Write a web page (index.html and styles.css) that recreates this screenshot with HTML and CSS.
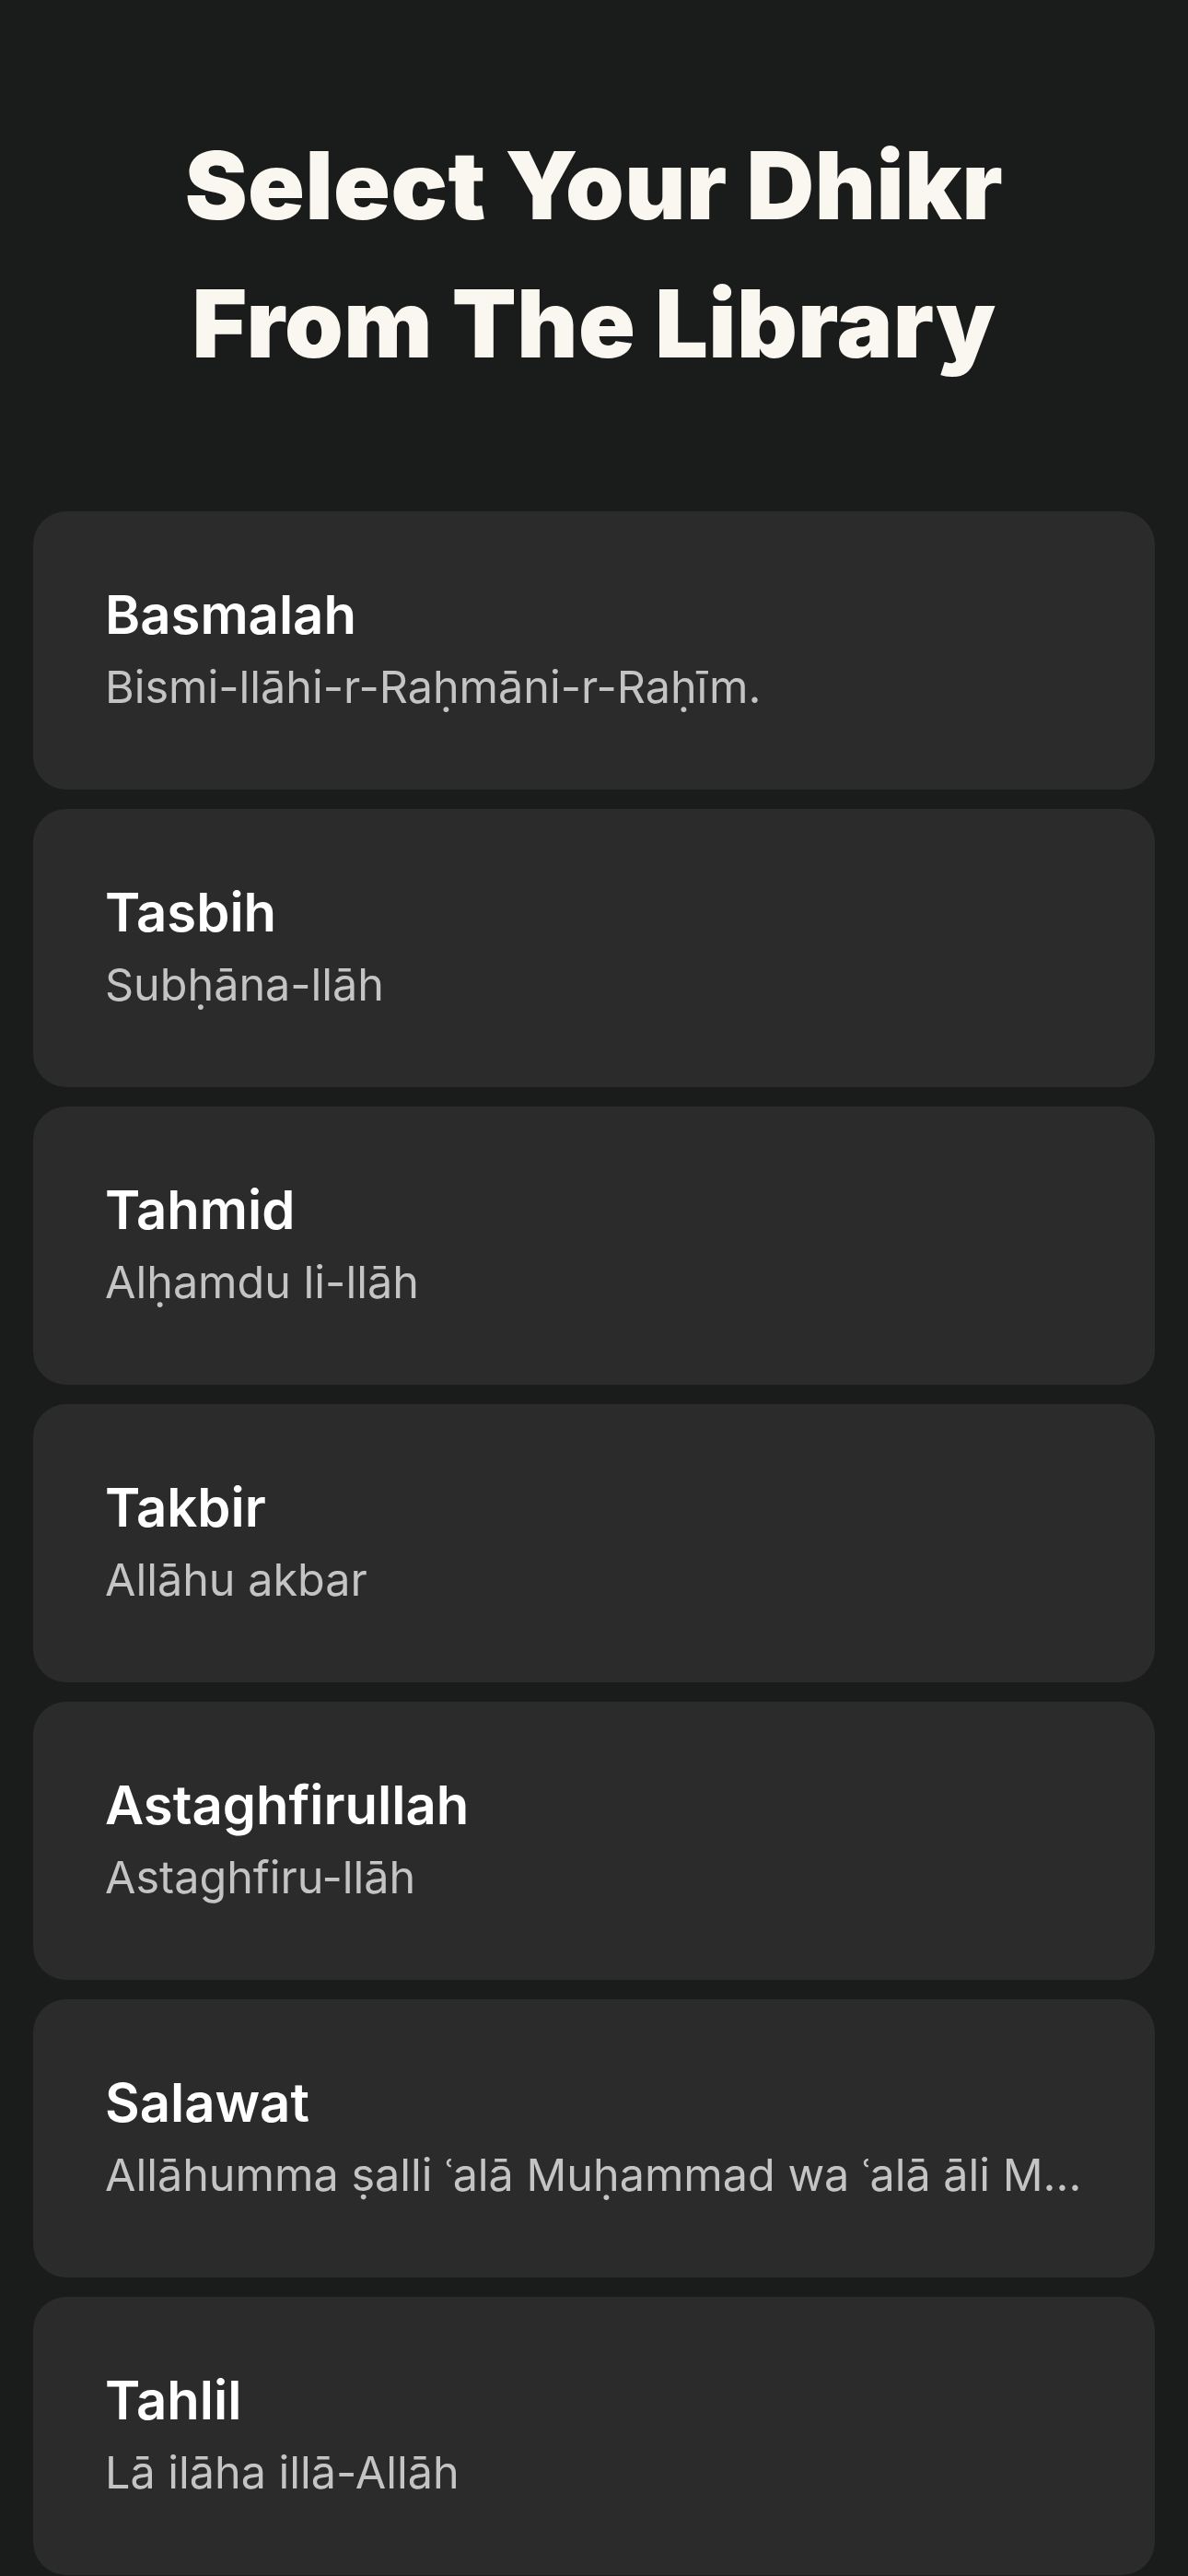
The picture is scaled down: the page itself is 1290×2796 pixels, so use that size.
FILE: index.html
```
<!DOCTYPE html>
<html lang="en">
<head>
	<meta charset="UTF-8">
	<title>Select Your Dhikr</title>
	<link rel="stylesheet" href="styles.css">
</head>
<body>

<h1 class="heading">Select Your Dhikr<br>From The Library</h1>

<div class="library">
	<div class="card">
		<div class="card-title">Basmalah</div>
		<div class="card-text">Bismi-llāhi-r-Raḥmāni-r-Raḥīm.</div>
	</div>
	<div class="card">
		<div class="card-title">Tasbih</div>
		<div class="card-text">Subḥāna-llāh</div>
	</div>
	<div class="card">
		<div class="card-title">Tahmid</div>
		<div class="card-text">Alḥamdu li-llāh</div>
	</div>
	<div class="card">
		<div class="card-title">Takbir</div>
		<div class="card-text">Allāhu akbar</div>
	</div>
	<div class="card">
		<div class="card-title">Astaghfirullah</div>
		<div class="card-text">Astaghfiru-llāh</div>
	</div>
	<div class="card">
		<div class="card-title">Salawat</div>
		<div class="card-text">Allāhumma ṣalli ʿalā Muḥammad wa ʿalā āli Muḥammad</div>
	</div>
	<div class="card">
		<div class="card-title">Tahlil</div>
		<div class="card-text">Lā ilāha illā-Allāh</div>
	</div>
</div>

</body>
</html>
```

FILE: styles.css
```
html, body {
	margin: 0;
	padding: 0;
	background: #1a1c1c;
}

body {
	font-family: Inter, "Noto Sans", sans-serif;
	overflow: hidden;
}

.heading {
	margin: 0;
	padding: 126px 0 0;
	height: 429px;
	box-sizing: border-box;
	text-align: center;
	font-size: 102px;
	line-height: 150px;
	font-weight: 900;
	letter-spacing: 0.5px;
	color: #faf6f0;
}

.library {
	display: flex;
	flex-direction: column;
	gap: 21px;
	padding: 0 36px;
	margin-top: 126px;
}

.card {
	height: 302px;
	box-sizing: border-box;
	padding: 0 78px 6px;
	border-radius: 36px;
	background: #2b2b2b;
	display: flex;
	flex-direction: column;
	justify-content: center;
}

.card-title {
	font-size: 58px;
	line-height: 72px;
	font-weight: 600;
	color: #ffffff;
}

.card-text {
	margin-top: 13px;
	font-size: 48.5px;
	line-height: 60px;
	color: #c4c4c4;
	white-space: nowrap;
	overflow: hidden;
	text-overflow: ellipsis;
}
```
